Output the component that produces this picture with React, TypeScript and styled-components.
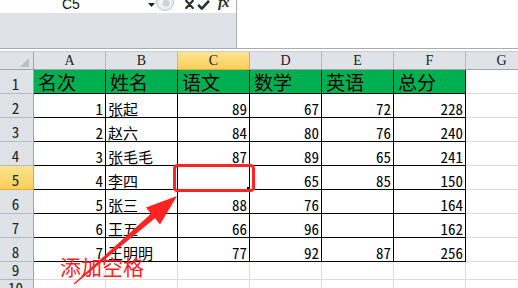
import React from 'react';
import styled, { createGlobalStyle, css } from 'styled-components';

const GlobalStyle = createGlobalStyle`
  *, *::before, *::after { box-sizing: border-box; }
  html, body { margin: 0; padding: 0; background: #ffffff; overflow: hidden; }
  #root { width: 518px; height: 288px; }
`;

const CJK = `"Noto Sans CJK SC", "Noto Sans", sans-serif`;
const CELLFONT = `"Noto Sans Mono CJK SC", "Noto Sans CJK SC", "Liberation Mono", monospace`;

const HEADER_BG = '#dfe3e8';
const HEADER_LINE = '#b3b9c1';
const HEADER_EDGE = '#9ea5ae';
const GRID = '#dadcdd';
const RED = '#ff2323';

const Screen = styled.div`
  position: relative;
  width: 518px;
  height: 288px;
  overflow: hidden;
  display: flex;
  flex-direction: column;
  background: #fff;
`;

const FormulaArea = styled.div`
  display: flex;
  height: 48px;
  flex: none;
`;

const LeftPane = styled.div`
  width: 237px;
  border-right: 1px solid #a9afb7;
  background: #dee1e6;
  display: flex;
  flex-direction: column;
`;

const NameRow = styled.div`
  height: 13px;
  background: #fff;
  display: flex;
  align-items: flex-start;
  overflow: hidden;
`;

const NameBox = styled.div`
  width: 146px;
  padding-left: 62px;
  margin-top: -2px;
  font-family: "Liberation Sans", Arial, sans-serif;
  font-size: 14px;
  line-height: 13px;
  color: #111;
`;

const DropArrow = styled.svg`
  margin-left: 2px;
  margin-top: 3px;
  flex: none;
`;

const Grip = styled.svg`
  margin-left: 0;
  margin-top: -7px;
  flex: none;
`;

const BarIcon = styled.svg<{ $gap: number }>`
  margin-left: ${p => p.$gap}px;
  margin-top: 0;
  flex: none;
`;

const FxLabel = styled.span`
  margin-left: 8px;
  margin-top: -5px;
  font-family: "Liberation Serif", "Times New Roman", serif;
  font-style: italic;
  font-weight: bold;
  font-size: 15px;
  line-height: 15px;
  color: #2a2a2a;
  letter-spacing: -1px;
`;

const FormulaInput = styled.div`
  flex: 1;
  background: #fff;
`;

const Splitter = styled.div`
  height: 4px;
  flex: none;
  border-top: 1px solid #a7adb5;
  border-bottom: 1px solid #c9cdd3;
  background: #fff;
`;

const Sheet = styled.div`
  display: grid;
  grid-template-columns: 34px repeat(7, 72px);
  grid-template-rows: 18px repeat(8, 24px) repeat(3, 18px);
  flex: none;
`;

const Corner = styled.div`
  background: ${HEADER_BG};
  border-right: 1px solid ${HEADER_EDGE};
  border-bottom: 1px solid ${HEADER_EDGE};
  display: flex;
  align-items: flex-end;
  justify-content: flex-end;
  padding: 0 4px 2px 0;
`;

const activeHeader = css`
  background: linear-gradient(#fde38f, #f8cf5a);
`;

const ColHeader = styled.div<{ $active?: boolean }>`
  background: ${HEADER_BG};
  border-right: 1px solid ${HEADER_LINE};
  border-bottom: 1px solid ${HEADER_EDGE};
  font-family: "Liberation Serif", "Times New Roman", serif;
  font-size: 14px;
  line-height: 17px;
  text-align: center;
  color: #222;
  ${p => p.$active && activeHeader}
  ${p => p.$active && css`border-color: #e8a53c;`}
`;

const RowHeader = styled.div<{ $active?: boolean }>`
  background: ${HEADER_BG};
  border-right: 1px solid ${HEADER_EDGE};
  border-bottom: 1px solid ${HEADER_LINE};
  font-family: ${CELLFONT};
  font-size: 15px;
  line-height: 15px;
  color: #222;
  display: flex;
  align-items: flex-end;
  justify-content: center;
  padding-bottom: 2px;
  padding-right: 2px;
  ${p => p.$active && activeHeader}
  ${p => p.$active && css`border-bottom-color: #e8a53c; border-right-color: #e8a53c;`}
`;

type Kind = 'title' | 'body' | 'blank';

const Cell = styled.div<{ $kind: Kind; $right?: boolean }>`
  position: relative;
  display: flex;
  border-right: 1px solid ${p => (p.$kind === 'blank' ? GRID : '#000')};
  border-bottom: 1px solid ${p => (p.$kind === 'blank' ? GRID : '#000')};
  justify-content: ${p => (p.$right ? 'flex-end' : 'flex-start')};
  color: #000;
  white-space: nowrap;
  overflow: visible;
  ${p =>
    p.$kind === 'title'
      ? css`
          background: #00b050;
          font-family: ${CJK};
          font-size: 19px;
          line-height: 19px;
          align-items: center;
          padding: 0 0 1px 4px;
        `
      : css`
          background: #fff;
          font-family: ${CELLFONT};
          font-size: 15px;
          line-height: 15px;
          align-items: flex-end;
          padding: 0 2px 1px 2px;
        `}
`;

const FillHandle = styled.span`
  position: absolute;
  right: -2px;
  bottom: -2px;
  width: 4px;
  height: 4px;
  background: #000;
`;

const Overlay = styled.svg`
  position: absolute;
  left: 0;
  top: 0;
  pointer-events: none;
`;

const Callout = styled.div`
  position: absolute;
  left: 60px;
  top: 256px;
  font-family: ${CJK};
  font-size: 21px;
  line-height: 21px;
  color: ${RED};
`;

const COLS = ['A', 'B', 'C', 'D', 'E', 'F', 'G'];

const TITLES = ['名次', '姓名', '语文', '数学', '英语', '总分'];

const ROWS: (string | number | null)[][] = [
  [1, '张起', 89, 67, 72, 228],
  [2, '赵六', 84, 80, 76, 240],
  [3, '张毛毛', 87, 89, 65, 241],
  [4, '李四', null, 65, 85, 150],
  [5, '张三', 88, 76, null, 164],
  [6, '王五', 66, 96, null, 162],
  [7, '王明明', 77, 92, 87, 256],
];

export default function App() {
  return (
    <>
      <GlobalStyle />
      <Screen>
        <FormulaArea>
          <LeftPane>
            <NameRow>
              <NameBox>C5</NameBox>
              <DropArrow width="7" height="4" viewBox="0 0 7 4">
                <path d="M0 0 H7 L3.5 4 Z" fill="#1e1e1e" />
              </DropArrow>
              <Grip width="21" height="20" viewBox="0 0 21 20">
                <defs>
                  <radialGradient id="gripFill" cx="0.5" cy="0.45" r="0.6">
                    <stop offset="0" stopColor="#ffffff" />
                    <stop offset="1" stopColor="#e2e5e9" />
                  </radialGradient>
                </defs>
                <circle cx="10" cy="9" r="8.5" fill="url(#gripFill)" stroke="#c3c8ce" strokeWidth="1" />
                <circle cx="11" cy="10" r="3.5" fill="#cfd3d8" />
              </Grip>
              <BarIcon $gap={9} width="9" height="9" viewBox="0 0 9 9">
                <path d="M1.2 0.8 L7.8 8 M7.8 0.8 L1.2 8" stroke="#2e2e2e" strokeWidth="2.2" strokeLinecap="round" />
              </BarIcon>
              <BarIcon $gap={3} width="13" height="10" viewBox="0 0 13 10">
                <path d="M1.2 4.8 L4.8 8.6 L12 0.8" stroke="#2e2e2e" strokeWidth="2.6" fill="none" strokeLinejoin="round" />
              </BarIcon>
              <FxLabel>fx</FxLabel>
            </NameRow>
          </LeftPane>
          <FormulaInput />
        </FormulaArea>
        <Splitter />
        <Sheet>
          <Corner>
            <svg width="9" height="9" viewBox="0 0 9 9">
              <path d="M9 0 V9 H0 Z" fill="#b9bfc7" />
            </svg>
          </Corner>
          {COLS.map(c => (
            <ColHeader key={c} $active={c === 'C'}>
              {c}
            </ColHeader>
          ))}

          <RowHeader>1</RowHeader>
          {TITLES.map(t => (
            <Cell key={t} $kind="title">
              {t}
            </Cell>
          ))}
          <Cell $kind="blank" />

          {ROWS.map((row, ri) => (
            <React.Fragment key={ri}>
              <RowHeader $active={ri + 2 === 5}>{ri + 2}</RowHeader>
              {row.map((v, ci) => (
                <Cell key={ci} $kind="body" $right={typeof v === 'number'}>
                  {v}
                  {ri + 2 === 5 && ci === 2 && <FillHandle />}
                </Cell>
              ))}
              <Cell $kind="blank" />
            </React.Fragment>
          ))}

          {[9, 10, 11].map(r => (
            <React.Fragment key={r}>
              <RowHeader>{r}</RowHeader>
              {COLS.map(c => (
                <Cell key={c} $kind="blank" />
              ))}
            </React.Fragment>
          ))}
        </Sheet>

        <Overlay width="518" height="288" viewBox="0 0 518 288">
          <rect x="174.5" y="165.5" width="79" height="25" rx="3" ry="3" fill="none" stroke={RED} strokeWidth="3" />
          <polygon
            points="73.6,283.6 151,213.7 146,207.6 177,196 160,224.4 155,218.3 74.4,284.4"
            fill={RED}
          />
        </Overlay>
        <Callout>添加空格</Callout>
      </Screen>
    </>
  );
}
